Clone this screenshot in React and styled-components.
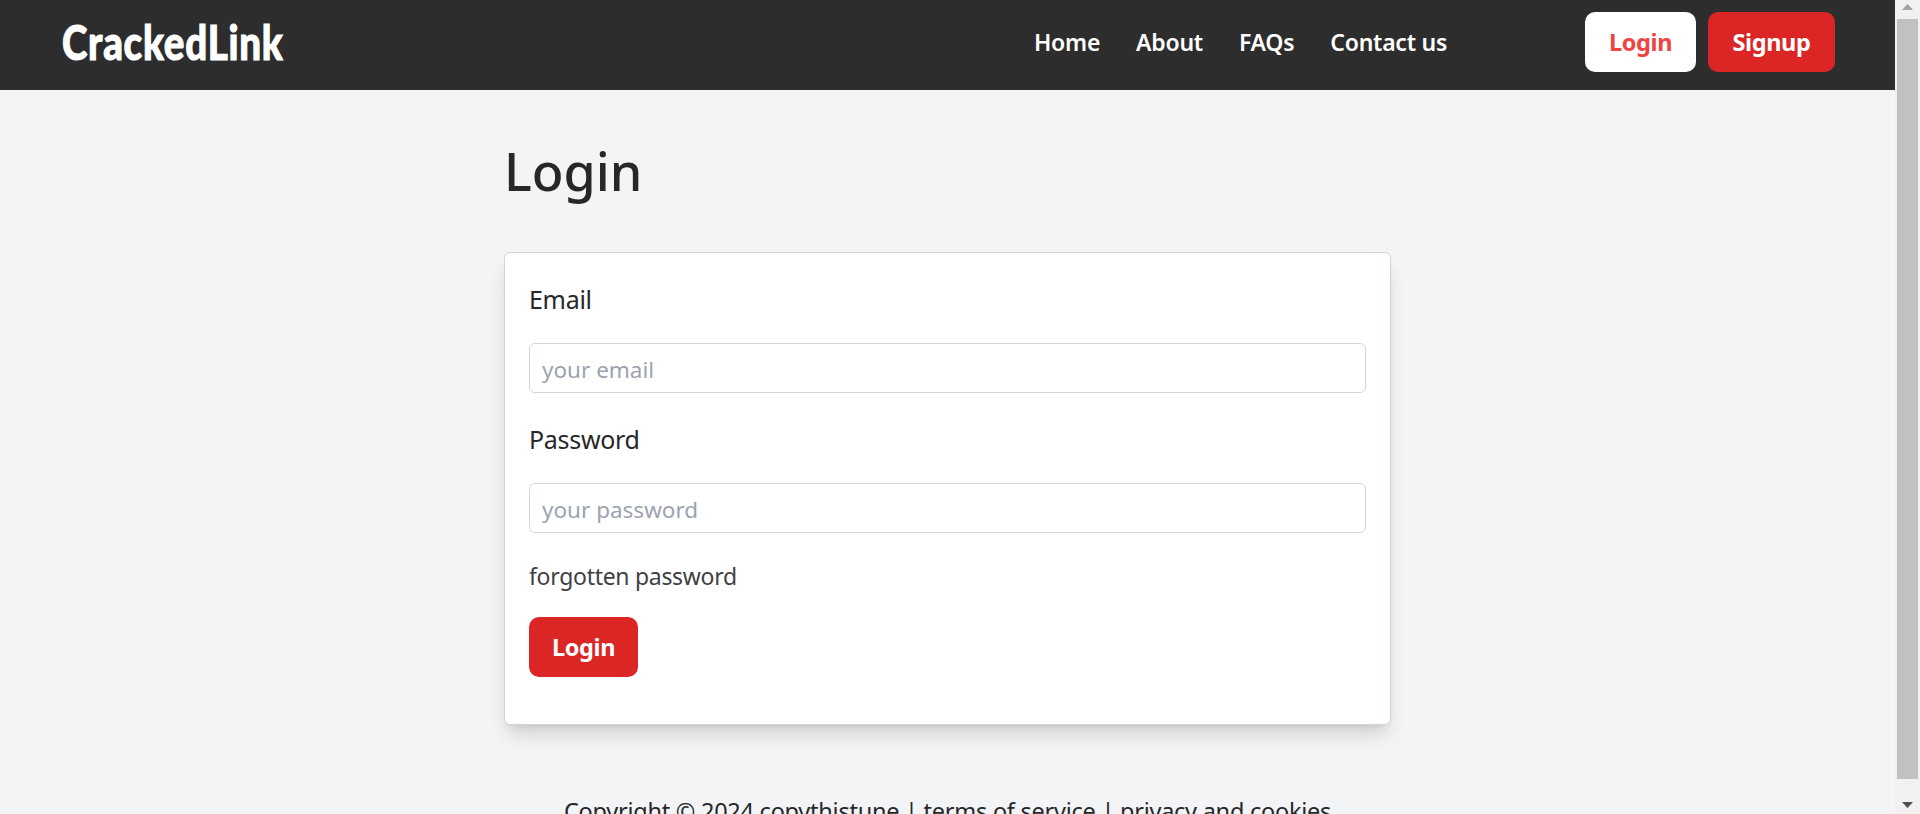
import React from 'react';
import styled, { createGlobalStyle } from 'styled-components';

const GlobalStyle = createGlobalStyle`
  body {
    margin: 0;
    background: #f3f4f6;
    font-family: "Noto Sans", "Open Sans", sans-serif;
    color: #27272a;
  }
  * {
    box-sizing: border-box;
  }
`;

const Shell = styled.div`
  height: 100vh;
  display: flex;
  overflow: hidden;
`;

const Page = styled.div`
  flex: 1;
  min-width: 0;
  display: flex;
  flex-direction: column;
`;

const Header = styled.header`
  flex: none;
  height: 90px;
  background: #2d2d2d;
  display: flex;
  align-items: center;
  padding: 0 60px 6px 62px;
`;

const Logo = styled.a`
  display: inline-block;
  font-family: "Lato", sans-serif;
  font-weight: 900;
  font-size: 47px;
  line-height: 1;
  letter-spacing: 0.9px;
  color: #fff;
  -webkit-text-stroke: 1px #fff;
  transform: scaleX(0.82);
  transform-origin: left center;
`;

const Nav = styled.nav`
  margin-left: auto;
  margin-right: 138px;
  display: flex;
  gap: 36px;
`;

const NavLink = styled.a`
  color: #fff;
  font-size: 23px;
  font-weight: 600;
  letter-spacing: -0.25px;
`;

const Actions = styled.div`
  display: flex;
  gap: 12px;
`;

const Button = styled.button`
  height: 60px;
  width: ${p => p.$width}px;
  border: 0;
  border-radius: 10px;
  background: ${p => (p.$light ? '#fff' : '#dc2626')};
  color: ${p => (p.$light ? '#ef4444' : '#fff')};
  font-family: inherit;
  font-size: 23.5px;
  font-weight: 700;
  letter-spacing: -0.35px;
  padding: 0;
`;

const Main = styled.main`
  flex: none;
  width: 887px;
  margin: 0 auto;
`;

const Title = styled.h1`
  margin: 44px 0 0 0;
  height: 118px;
  font-size: 52px;
  line-height: 74px;
  font-weight: 500;
  color: #27272a;
`;

const Card = styled.form`
  height: 473px;
  background: #fff;
  border: 1px solid #d1d5db;
  border-radius: 6px;
  padding: 25px 24px;
  box-shadow: 0 13px 19px -4px rgba(0, 0, 0, 0.14), 0 5px 8px -5px rgba(0, 0, 0, 0.1);
`;

const Label = styled.label`
  display: block;
  height: 40px;
  margin-bottom: 25px;
  font-size: 25px;
  line-height: 42px;
  letter-spacing: -0.3px;
`;

const Input = styled.input`
  display: block;
  width: 100%;
  height: 50px;
  margin-bottom: 25px;
  padding: 2px 12px 0;
  border: 1px solid #d1d5db;
  border-radius: 6px;
  font-family: inherit;
  font-size: 22.5px;
  outline: none;
  &::placeholder {
    color: #9ca3af;
  }
`;

const Forgot = styled.a`
  display: block;
  height: 34px;
  margin-bottom: 25px;
  font-size: 23px;
  line-height: 36px;
  letter-spacing: -0.3px;
  color: #3f3f46;
`;

const Footer = styled.footer`
  flex: none;
  margin-top: 70px;
  text-align: center;
  font-size: 23.5px;
  line-height: 32px;
  letter-spacing: -0.25px;
  color: #27272a;
`;

const ScrollBar = styled.div`
  flex: none;
  width: 25px;
  background: #f1f1f1;
  display: flex;
  flex-direction: column;
  align-items: center;
`;

const ScrollArrow = styled.svg`
  flex: none;
  width: 25px;
  height: 19px;
  fill: ${p => p.$color};
`;

const ScrollThumb = styled.div`
  width: 21px;
  height: 760px;
  background: #c1c1c1;
`;

const ScrollGap = styled.div`
  flex: 1;
`;

export default function App() {
  return (
    <Shell>
      <GlobalStyle />
      <Page>
        <Header>
          <Logo>CrackedLink</Logo>
          <Nav>
            <NavLink>Home</NavLink>
            <NavLink>About</NavLink>
            <NavLink>FAQs</NavLink>
            <NavLink>Contact us</NavLink>
          </Nav>
          <Actions>
            <Button $light $width={111}>Login</Button>
            <Button $width={127}>Signup</Button>
          </Actions>
        </Header>
        <Main>
          <Title>Login</Title>
          <Card>
            <Label>Email</Label>
            <Input placeholder="your email" />
            <Label>Password</Label>
            <Input placeholder="your password" />
            <Forgot>forgotten password</Forgot>
            <Button type="button" $width={109}>Login</Button>
          </Card>
        </Main>
        <Footer>Copyright © 2024 copythistune | terms of service | privacy and cookies</Footer>
      </Page>
      <ScrollBar>
        <ScrollArrow $color="#a3a3a3" viewBox="0 0 25 19"><path d="M12.5 4L18 10H7z" /></ScrollArrow>
        <ScrollThumb />
        <ScrollGap />
        <ScrollArrow $color="#505050" viewBox="0 0 25 19"><path d="M12.5 13L18 7H7z" /></ScrollArrow>
      </ScrollBar>
    </Shell>
  );
}
